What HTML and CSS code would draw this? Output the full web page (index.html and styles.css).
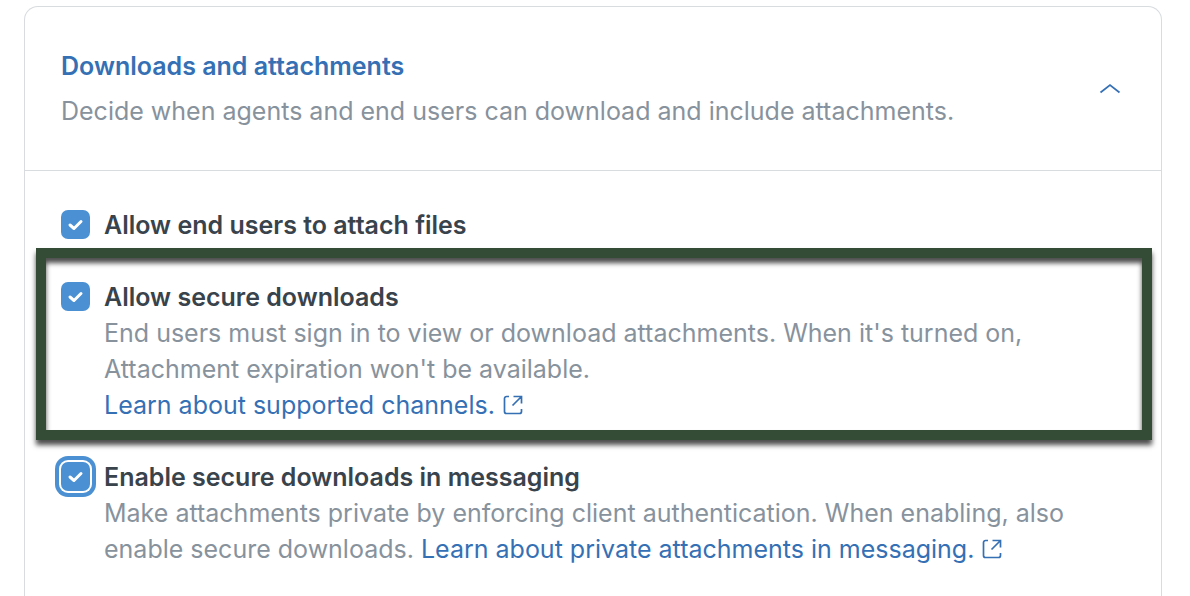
FILE: index.html
```html
<!DOCTYPE html>
<html lang="en">
<head>
    <meta charset="UTF-8">
    <meta name="viewport" content="width=device-width, initial-scale=1">
    <title>Downloads and attachments</title>
    <link rel="stylesheet" href="styles.css">
</head>
<body>
    <section class="card">
        <header class="card-header">
            <div class="card-heading">
                <h2>Downloads and attachments</h2>
                <p>Decide when agents and end users can download and include attachments.</p>
            </div>
            <button class="collapse" type="button" aria-label="Collapse section" aria-expanded="true">
                <svg width="22" height="12" viewBox="0 0 22 12" fill="none" stroke="currentColor" stroke-width="1.7">
                    <path d="M1.5 9.5 11 2l9.5 7.5"/>
                </svg>
            </button>
        </header>

        <div class="card-body">
            <div class="option">
                <input type="checkbox" id="attach-files" checked>
                <div class="option-text">
                    <label for="attach-files">Allow end users to attach files</label>
                </div>
            </div>

            <div class="option highlighted">
                <input type="checkbox" id="secure-downloads" checked>
                <div class="option-text">
                    <label for="secure-downloads">Allow secure downloads</label>
                    <p>End users must sign in to view or download attachments. When it's turned on, Attachment expiration won't be available.</p>
                    <a href="#">Learn about supported channels.
                        <svg class="external" width="20" height="20" viewBox="0 0 20 20" fill="none" stroke="currentColor" stroke-width="1.7">
                            <path d="M6 1.500H3.500a2 2 0 0 0-2 2v13a2 2 0 0 0 2 2h13a2 2 0 0 0 2-2V14M10.500 1.500h8v7M18.500 1.500l-9 9"/>
                        </svg></a>
                </div>
            </div>

            <div class="option">
                <input class="focused" type="checkbox" id="secure-messaging" checked>
                <div class="option-text">
                    <label for="secure-messaging">Enable secure downloads in messaging</label>
                    <p>Make attachments private by enforcing client authentication. When enabling, also enable secure downloads.
                        <a href="#">Learn about private attachments in messaging.
                            <svg class="external" width="20" height="20" viewBox="0 0 20 20" fill="none" stroke="currentColor" stroke-width="1.7">
                                <path d="M6 1.500H3.500a2 2 0 0 0-2 2v13a2 2 0 0 0 2 2h13a2 2 0 0 0 2-2V14M10.500 1.500h8v7M18.500 1.500l-9 9"/>
                            </svg></a></p>
                </div>
            </div>
        </div>
    </section>
</body>
</html>
```
FILE: styles.css
```css
:root {
    --link-color: #3570b5;
    --checkbox-color: #4a90d2;
    --text-color: #39434c;
    --muted-color: #87929d;
    --border-color: #d8dcde;
    --highlight-color: #344b35;
}

* {
    box-sizing: border-box;
    margin: 0;
    padding: 0;
}

body {
    font-family: Inter, "Liberation Sans", sans-serif;
    font-size: 25px;
    line-height: 36px;
    color: var(--muted-color);
    background: #fff;
    padding: 6px 28px 0 24px;
}

.card {
    border: 1px solid var(--border-color);
    border-bottom: none;
    border-radius: 14px 14px 0 0;
}

.card-header {
    display: flex;
    align-items: center;
    justify-content: space-between;
    padding: 41px 36px;
    border-bottom: 1px solid var(--border-color);
}

.card-heading {
    display: flex;
    flex-direction: column;
    gap: 9px;
}

h2 {
    font-size: 25px;
    font-weight: 600;
    color: var(--link-color);
}

.collapse {
    display: flex;
    padding: 4px;
    border: none;
    background: none;
    color: var(--link-color);
    cursor: pointer;
}

.card-body {
    padding: 36px 36px 31px;
}

.option {
    display: flex;
    align-items: flex-start;
    gap: 14px;
}

.option-text {
    flex: 1;
    max-width: 960px;
}

label {
    display: block;
    font-weight: 600;
    color: var(--text-color);
}

a {
    color: var(--link-color);
    text-decoration: none;
}

.highlighted {
    margin: 5px -27px 19px -25px;
    padding: 21px 15px 7px;
    border: 10px solid var(--highlight-color);
    box-shadow: 0 5px 5px rgba(0, 0, 0, 0.7), inset 0 5px 5px rgba(0, 0, 0, 0.7);
}

input[type="checkbox"] {
    appearance: none;
    flex: none;
    width: 29px;
    height: 29px;
    margin-top: 3px;
    border-radius: 7px;
    background: var(--checkbox-color) url("data:image/svg+xml,%3Csvg xmlns='http://www.w3.org/2000/svg' viewBox='0 0 29 29' fill='none' stroke='white' stroke-width='3' stroke-linecap='round' stroke-linejoin='round'%3E%3Cpath d='M9 15l4 3.500 7-7'/%3E%3C/svg%3E") center / contain no-repeat;
    cursor: pointer;
}

input.focused,
input[type="checkbox"]:focus-visible {
    outline: none;
    box-shadow: 0 0 0 2px #fff, 0 0 0 6px var(--checkbox-color);
}

.external {
    margin-left: 1px;
    vertical-align: -1px;
}
```
